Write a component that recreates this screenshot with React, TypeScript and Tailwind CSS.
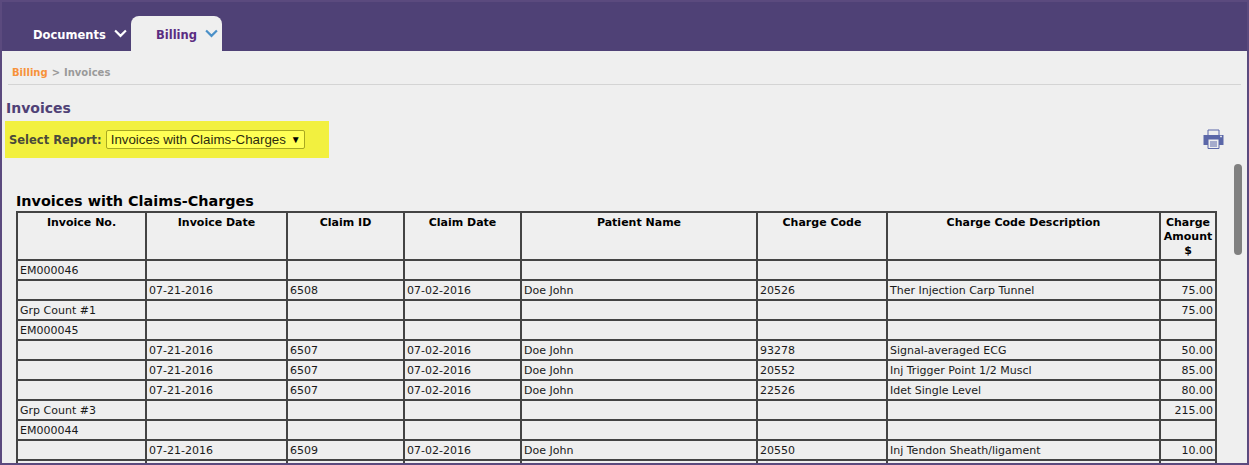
const cols = [129, 141, 117, 117, 236, 130, 273, 56];
const headers = ["Invoice No.", "Invoice Date", "Claim ID", "Claim Date", "Patient Name", "Charge Code", "Charge Code Description"];

// first, date, claim, claimDate, patient, code, description, amount
const rows: string[][] = [
  ["EM000046", "", "", "", "", "", "", ""],
  ["", "07-21-2016", "6508", "07-02-2016", "Doe John", "20526", "Ther Injection Carp Tunnel", "75.00"],
  ["Grp Count #1", "", "", "", "", "", "", "75.00"],
  ["EM000045", "", "", "", "", "", "", ""],
  ["", "07-21-2016", "6507", "07-02-2016", "Doe John", "93278", "Signal-averaged ECG", "50.00"],
  ["", "07-21-2016", "6507", "07-02-2016", "Doe John", "20552", "Inj Trigger Point 1/2 Muscl", "85.00"],
  ["", "07-21-2016", "6507", "07-02-2016", "Doe John", "22526", "Idet Single Level", "80.00"],
  ["Grp Count #3", "", "", "", "", "", "", "215.00"],
  ["EM000044", "", "", "", "", "", "", ""],
  ["", "07-21-2016", "6509", "07-02-2016", "Doe John", "20550", "Inj Tendon Sheath/ligament", "10.00"],
  ["", "", "", "", "", "", "", ""],
];

function Chevron({ className }: { className: string }) {
  return (
    <svg viewBox="0 0 12 8" className={className} fill="none" stroke="currentColor" strokeWidth="2">
      <path d="M1 1.2 L6 6.2 L11 1.2" />
    </svg>
  );
}

function PrinterIcon() {
  return (
    <svg viewBox="0 0 20 20" className="h-[20px] w-[21px]">
      <path d="M4.5 6V1h11v5" fill="none" stroke="#5b67a8" strokeWidth="1" />
      <path d="M0 6h20v10H0z" fill="#5b67a8" />
      <path d="M4.5 10h11v9.5h-11z" fill="#efefef" stroke="#5b67a8" strokeWidth="1" />
      <path d="M6.5 13h7M6.5 15h7M6.5 17h7" stroke="#5b67a8" strokeWidth="1" />
      <path d="M16.5 7.5h2M17.5 6.5v2" stroke="#efefef" strokeWidth="0.8" />
    </svg>
  );
}

export default function App() {
  return (
    <div className="relative h-[465px] w-[1249px] overflow-hidden border-2 border-[#5b4a7e] bg-[#efefef] font-['DejaVu_Sans',sans-serif]">
      <nav className="flex h-[49px] items-end bg-[#4f4176] pl-[29px]">
        <div className="flex h-[35px] w-[100px] items-center gap-[8px] pt-[5px] pl-[2px] text-[11.5px] font-bold text-white">
          Documents
          <Chevron className="mb-[5px] h-[9px] w-[13px] text-white" />
        </div>
        <div className="flex h-[35px] w-[91px] items-center gap-[8px] rounded-t-[8px] bg-[#efefef] pt-[5px] pl-[25px] text-[11.5px] font-bold text-[#5b2d82]">
          Billing
          <Chevron className="mb-[5px] h-[9px] w-[13px] text-[#4a90c8]" />
        </div>
      </nav>

      <div className="mx-[6px] flex h-[34px] items-end gap-[4px] border-b border-[#d4d4d4] pb-[4px] pl-[4px] text-[10px] font-bold text-[#9a9a9a]">
        <span className="text-[#f7923a]">Billing</span>
        <span>&gt;</span>
        <span>Invoices</span>
      </div>

      <h1 className="mt-[15px] pl-[4px] text-[14px] leading-[17px] font-bold text-[#4f4176]">Invoices</h1>

      <div className="flex items-start justify-between pr-[23px]">
        <div className="mt-[4px] ml-[3px] flex h-[37px] w-[324px] items-center bg-[#f2f03f] pl-[4px]">
          <span className="pt-[2px] text-[11.5px] font-bold text-[#4a4a3a]">Select Report:</span>
          <div className="ml-[4px] flex h-[19px] w-[199px] items-center justify-between rounded-[2px] border border-[#a8a820] bg-[#ffff55] pr-[3px] pl-[4px] font-['Liberation_Sans',sans-serif] text-[13.3px] text-[#2c2c10]">
            Invoices with Claims-Charges
            <span className="text-[10px] text-black">▼</span>
          </div>
        </div>
        <div className="mt-[12px]">
          <PrinterIcon />
        </div>
      </div>

      <div className="pl-[14px]">
        <h2 className="mt-[34px] text-[14.4px] leading-[19px] font-bold text-black">Invoices with Claims-Charges</h2>
        <table className="w-[1199px] table-fixed border-collapse text-[11px] text-[#1a1a1a]">
          <colgroup>
            {cols.map((w, i) => (
              <col key={i} style={{ width: w }} />
            ))}
          </colgroup>
          <thead>
            <tr className="h-[48px]">
              {headers.map((h) => (
                <th key={h} className="border-2 border-[#444] px-[2px] pt-[3px] align-top text-[11px] leading-[14px] font-bold text-black">
                  {h}
                </th>
              ))}
              <th className="border-2 border-[#444] px-0 pt-[3px] align-top text-[11px] leading-[14px] font-bold text-black">
                Charge Amount $
              </th>
            </tr>
          </thead>
          <tbody>
            {rows.map((r, i) => (
              <tr key={i} className="h-[20px]">
                {r.map((c, j) => (
                  <td
                    key={j}
                    className={
                      j === 7
                        ? "border-2 border-[#444] px-[2px] pt-[1px] pb-0 text-right leading-[16px]"
                        : "border-2 border-[#444] px-[2px] pt-[1px] pb-0 leading-[16px]"
                    }
                  >
                    {c}
                  </td>
                ))}
              </tr>
            ))}
          </tbody>
        </table>
      </div>

      {/* scrollbar thumb */}
      <div className="absolute top-[162px] left-[1232px] h-[91px] w-[8px] rounded-[4px] bg-[#808080]" />
    </div>
  );
}
